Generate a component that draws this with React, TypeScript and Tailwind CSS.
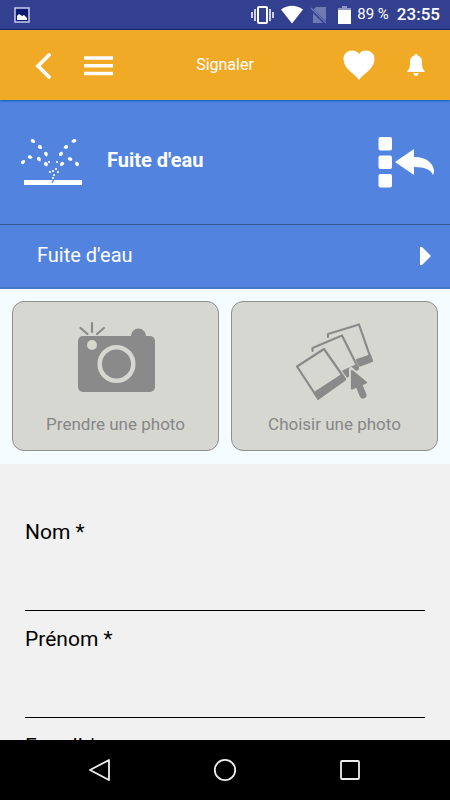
import { useState } from 'react';

const drops = [
  [33, 140, 30], [40, 146, 40], [46, 153, 60], [46, 163, 50],
  [39, 158, 50], [30, 156, 10], [23, 161, -50],
  [74, 140, 150], [66, 146, 140], [61, 153, 120], [62, 163, 130],
  [70, 158, 190], [77, 163, 230],
];

const droplets = [[49, 161], [57, 161], [50, 171], [53, 170], [56, 168], [58, 171], [54, 174], [53, 177]];

function StatusBar() {
  return (
    <div className="flex h-[30px] shrink-0 items-center justify-between border-b border-[#17206f] bg-[#334090] pl-3.5 pr-2.5 text-white">
      <svg className="h-4 w-4" viewBox="0 0 16 16" aria-hidden="true">
        <rect x="1" y="1" width="14" height="14" fill="#101b72" stroke="#c9cdf0" strokeWidth="1.5" />
        <path d="M3 13V9l2-2 3 2 2-1 3 3v2z" fill="#fff" />
      </svg>
      <div className="flex items-center">
        <svg className="h-[30px] w-[102px]" viewBox="250 0 102 30" aria-hidden="true">
          <rect x="257" y="7" width="9" height="16" rx="1" fill="none" stroke="#fff" strokeWidth="2" />
          <path d="M254 9v12M269 9v12" stroke="#fff" strokeWidth="1.5" />
          <path d="M251 12v6M272 12v6" stroke="#fff" strokeWidth="1.5" />
          <path d="M280 9.500Q291 2 302 9.500L291 23.500z" fill="#fff" />
          <path d="M315 7h10v14L312.500 9.500zM312 13l10 10h-10z" fill="#7079b3" />
          <path d="M310 8l15 15" stroke="#7079b3" strokeWidth="1.200" />
          <path d="M337 8h4V6h5v2h4v3h-13z" fill="#8d94c4" />
          <path d="M337 10h13v14h-13z" fill="#fff" />
        </svg>
        <span className="ml-1 text-[15px]">89 %</span>
        <span className="ml-2 text-[17px] font-medium">23:55</span>
      </div>
    </div>
  );
}

function Header() {
  return (
    <header className="z-10 grid h-[70px] shrink-0 grid-cols-[1fr_auto_1fr] items-center bg-[#f1aa25] text-white shadow-[0_1px_2px_#0060b8]">
      <div className="flex items-center gap-8 pl-[35px]">
        <button type="button" aria-label="Retour">
          <svg className="h-7 w-4" viewBox="0 0 16 28" fill="none" stroke="currentColor" strokeWidth="3.800">
            <path d="M14 4L3 15 14 26" strokeLinecap="round" />
          </svg>
        </button>
        <button type="button" aria-label="Menu">
          <svg className="h-7 w-[30px]" viewBox="0 0 30 28" stroke="currentColor" strokeWidth="3.500">
            <path d="M1 7h29M1 14.700h29M1 22.500h29" />
          </svg>
        </button>
      </div>
      <h1 className="text-base">Signaler</h1>
      <div className="flex items-center justify-end gap-8 pr-[25px]">
        <button type="button" aria-label="Favoris">
          <svg className="h-8 w-8" viewBox="0 0 32 32" fill="currentColor">
            <path d="M16 31C12 25 .5 20 .5 10 .5 1 12 -1 16 5 20 -1 31.500 1 31.500 10 31.500 20 20 25 16 31z" />
          </svg>
        </button>
        <button type="button" aria-label="Notifications">
          <svg className="h-6 w-[18px]" viewBox="0 0 18 24" fill="currentColor">
            <path d="M9 1c1 0 1.500.7 1.500 1.600C14 3.500 15 6 15 9c0 5 .5 7 2.500 8.500V19H.5v-1.500C2.500 16 3 14 3 9c0-3 1-5.500 4.500-6.400C7.500 1.700 8 1 9 1zM6.500 20h5c0 4-5 4-5 0z" />
          </svg>
        </button>
      </div>
    </header>
  );
}

function LeakIcon() {
  return (
    <svg className="h-[52px] w-[62px]" viewBox="21 135 62 52" fill="#fff" aria-hidden="true">
      {drops.map(([x, y, angle]) => (
        <path
          key={`${x}-${y}`}
          d="M-2.300 -.5C-2 -2 .5 -2.200 1.600 -1L2.700 .6 1.200 1.500C-.5 2.300 -2.600 1.500 -2.300 -.5z"
          transform={`translate(${x} ${y}) rotate(${angle})`}
        />
      ))}
      {droplets.map(([x, y]) => (
        <circle key={`${x}-${y}`} cx={x} cy={y} r="1.100" />
      ))}
      <path d="M24 179h58v5H24z" />
      <path d="M52 182l2-4" stroke="#5283df" strokeWidth="1.200" />
    </svg>
  );
}

function CameraIcon() {
  return (
    <svg className="h-[82px] w-20" viewBox="76 320 80 82" fill="#8a8a8a" aria-hidden="true">
      <path d="M80.500 328l7 6M92 323v9M104 328l-7 6" stroke="#8a8a8a" strokeWidth="2.200" strokeLinecap="round" />
      <rect x="78" y="336" width="77" height="56" rx="5" />
      <circle cx="138.500" cy="336" r="7.500" />
      <circle cx="92" cy="345" r="5" fill="#d6d7d1" />
      <circle cx="116.500" cy="364" r="16.800" stroke="#d6d7d1" strokeWidth="4.500" />
    </svg>
  );
}

function PhotosIcon() {
  return (
    <svg
      className="h-[82px] w-20"
      viewBox="295 320 80 82"
      fill="none"
      stroke="#8a8a8a"
      strokeWidth="2.200"
      strokeLinecap="round"
      strokeLinejoin="round"
      aria-hidden="true"
    >
      <path d="M328 337v-3l31-9.500 12.500 36-12 4.500" />
      <path d="M357 360l13-4.500 2 5.500-12 4.500z" fill="#8a8a8a" />
      <path d="M312.500 351v-3l29.500-12.500 16 32" />
      <path d="M343 371.500l13-6 2 3-11 8z" fill="#8a8a8a" />
      <path d="M297 366.500l27-17.500 21 30-27 19.500z" stroke="#d6d7d1" strokeWidth="4.500" />
      <path d="M297 366.500l27-17.500 21 30-27 19.500z" fill="#d6d7d1" />
      <path d="M314.500 393l27-17.500 3.500 4-27 19z" fill="#8a8a8a" />
      <g fill="#d6d7d1" stroke="#d6d7d1">
        <path d="M351 369l16 14-16 7z" strokeWidth="4" />
      </g>
      <path d="M352 371l14 11.500-14 6z" fill="#8a8a8a" />
      <path d="M358 383l5 12" strokeWidth="7" />
    </svg>
  );
}

function PhotoButton({ label, children }: { label: string; children: React.ReactNode }) {
  return (
    <button
      type="button"
      className="flex h-[150px] flex-1 flex-col items-center rounded-xl border border-[#8d8f91] bg-[#d6d7d1] pt-[18px] text-[17px] leading-6 text-[#868686]"
    >
      {children}
      <span className="mt-2.5">{label}</span>
    </button>
  );
}

function Field({ id, label }: { id: string; label: string }) {
  const [value, setValue] = useState('');

  return (
    <div className="mb-4">
      <label htmlFor={id} className="block text-[21px] leading-6">
        {label}
      </label>
      <input
        id={id}
        value={value}
        onChange={(e) => setValue(e.target.value)}
        className="block h-[67px] w-full border-b border-black bg-transparent pt-6 text-[21px] outline-none"
      />
    </div>
  );
}

export default function App() {
  return (
    <div className="flex h-screen flex-col bg-[#f1f1f1] font-['Roboto',sans-serif] text-black">
      <StatusBar />
      <Header />
      <main className="min-h-0 flex-1 overflow-y-auto [scrollbar-width:none]">
        <div className="flex h-[125px] items-center border-b border-[#32588e] bg-[#5283df] pl-[21px] pr-3.5 text-white">
          <LeakIcon />
          <h2 className="ml-6 flex-1 pb-1 text-xl font-bold">Fuite d'eau</h2>
          <button type="button" aria-label="Retour à la liste">
            <svg className="h-[54px] w-[58px]" viewBox="378 135 58 54" fill="currentColor">
              <rect x="378.500" y="137" width="13.500" height="13.500" rx="2" />
              <rect x="378.500" y="155.500" width="13.500" height="13.500" rx="2" />
              <rect x="378.500" y="174" width="13.500" height="13.500" rx="2" />
              <path d="M395 162l19-13v8c14 0 20 8 20 14 0 2-1 4-1 4-2-5-7-8-19-8v8z" />
            </svg>
          </button>
        </div>
        <button
          type="button"
          className="flex h-16 w-full items-center justify-between border-b-2 border-[#4877c9] bg-[#5283df] pl-[37px] pr-[18px] text-xl text-white"
        >
          <span className="pb-0.5">Fuite d'eau</span>
          <svg className="h-5 w-3" viewBox="0 0 12 20" fill="currentColor" aria-hidden="true">
            <path d="M0 1h2l9 9-9 9H0z" />
          </svg>
        </button>
        <section className="flex gap-3 bg-[#f4fcff] p-3 pb-[13px]">
          <PhotoButton label="Prendre une photo">
            <CameraIcon />
          </PhotoButton>
          <PhotoButton label="Choisir une photo">
            <PhotosIcon />
          </PhotoButton>
        </section>
        <form className="px-[25px] pt-14">
          <Field id="nom" label="Nom *" />
          <Field id="prenom" label="Prénom *" />
          <Field id="email" label="E-mail *" />
        </form>
      </main>
      <nav className="flex h-[60px] shrink-0 items-center justify-center gap-[101px] bg-black text-[#eee]">
        <button type="button" aria-label="Précédent">
          <svg className="h-6 w-6" viewBox="0 0 24 24" fill="none" stroke="currentColor" strokeWidth="1.800" strokeLinejoin="round">
            <path d="M21 2v20L2 12z" />
          </svg>
        </button>
        <button type="button" aria-label="Accueil">
          <svg className="h-6 w-6" viewBox="0 0 24 24" fill="none" stroke="currentColor" strokeWidth="1.800">
            <circle cx="12" cy="12" r="10.200" />
          </svg>
        </button>
        <button type="button" aria-label="Applications récentes">
          <svg className="h-6 w-6" viewBox="0 0 24 24" fill="none" stroke="currentColor" strokeWidth="1.800">
            <rect x="3" y="3" width="18" height="18" rx="1" />
          </svg>
        </button>
      </nav>
    </div>
  );
}
